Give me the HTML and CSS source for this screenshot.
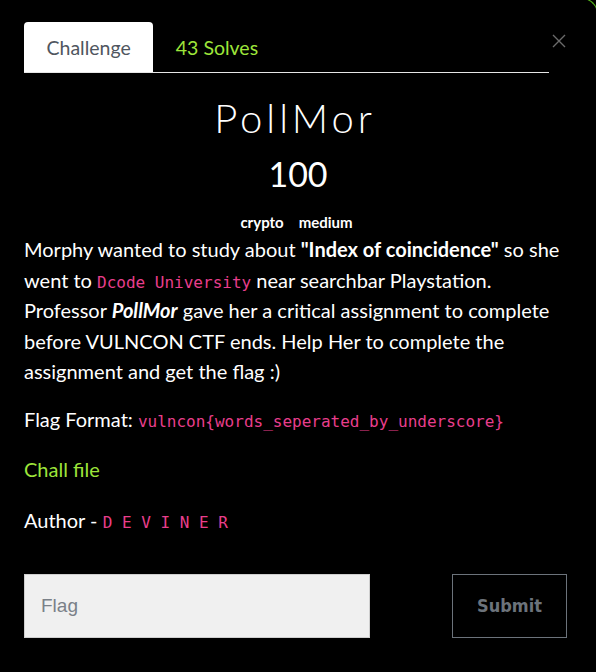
FILE: index.html
```html
<!DOCTYPE html>
<html>
<head>
<meta charset="utf-8">
<link rel="stylesheet" href="styles.css">
</head>
<body>
<div class="frame"></div>
<div class="modal">
  <div class="header">
    <nav class="tabs">
      <a class="tab active">Challenge</a>
      <a class="tab solves">43 Solves</a>
    </nav>
    <button class="close" aria-label="Close">
      <svg width="14" height="14" viewBox="0 0 14 14"><path d="M1 1L13 13M13 1L1 13" stroke="#6b6b6b" stroke-width="1.4" fill="none"/></svg>
    </button>
  </div>
  <h2 class="title">PollMor</h2>
  <h3 class="points">100</h3>
  <div class="tags"><span>crypto</span><span>medium</span></div>
  <p class="desc">Morphy wanted to study about <strong>"Index of coincidence"</strong> so she went to <code>Dcode University</code> near searchbar Playstation. Professor <strong><em>PollMor</em></strong> gave her a critical assignment to complete before VULNCON CTF ends. Help Her to complete the assignment and get the flag :)</p>
  <p class="line format">Flag Format: <code>vulncon{words_seperated_by_underscore}</code></p>
  <p class="line"><a class="file">Chall file</a></p>
  <p class="line author-line">Author - <code>D E V I N E R</code></p>
  <form class="submit-row">
    <input class="flag" type="text" placeholder="Flag">
    <button class="submit" type="button">Submit</button>
  </form>
</div>
</body>
</html>
```

FILE: styles.css
```css
html, body {
  margin: 0;
  padding: 0;
  background: #000;
}
body {
  width: 596px;
  height: 672px;
  overflow: hidden;
  position: relative;
  font-family: Lato, "Open Sans", sans-serif;
  color: #fff;
}
.frame {
  position: absolute;
  box-sizing: border-box;
  left: -20px;
  top: -2px;
  width: 618px;
  height: 674px;
  border: 1.5px solid #56b81c;
  border-bottom: none;
  border-radius: 16px 16px 0 0;
  pointer-events: none;
}
.modal {
  padding: 22px 24px 0 24px;
}
.header {
  display: flex;
  align-items: flex-start;
}
.tabs {
  display: flex;
  width: 525px;
  border-bottom: 1px solid #e6e6e6;
}
.tab {
  display: block;
  height: 50px;
  line-height: 52px;
  padding: 0 22.5px;
  font-size: 19.5px;
  text-decoration: none;
  border-radius: 4px 4px 0 0;
}
.tab.active {
  background: #fff;
  color: #4f5660;
}
.solves {
  color: #9de53a;
}
.close {
  background: none;
  border: 0;
  padding: 0;
  margin: 12px 0 0 3px;
  width: 14px;
  height: 14px;
  display: flex;
}
.title {
  margin: 21px 0 0 0;
  padding-right: 6px;
  text-align: center;
  font-weight: 300;
  font-size: 40px;
  letter-spacing: 4px;
  line-height: 48px;
}
.points {
  margin: 11px 0 0 0;
  text-align: center;
  font-weight: 400;
  font-size: 34px;
  line-height: 42px;
}
.tags {
  display: flex;
  justify-content: center;
  gap: 15px;
  margin-top: 19px;
  padding-right: 3px;
  font-size: 15px;
  font-weight: 700;
  line-height: 16px;
}
.desc {
  margin: 4px 0 0 0;
  font-size: 20px;
  line-height: 30.5px;
}
code {
  font-family: "DejaVu Sans Mono", monospace;
  font-size: 16px;
  line-height: 1;
  color: #e83e8c;
}
.line {
  margin: 20px 0 0 0;
  font-size: 20px;
  line-height: 30px;
}
.line.format {
  margin-top: 17px;
}
.line.author-line {
  margin-top: 21px;
}
.file {
  color: #9de53a;
}
.submit-row {
  display: flex;
  gap: 82px;
  margin-top: 39px;
}
.flag {
  box-sizing: border-box;
  width: 346px;
  height: 64px;
  background: #f0f0f0;
  border: 1px solid #cfcfcf;
  padding: 0 16px;
  font-family: "Liberation Sans", Arial, sans-serif;
  font-size: 19px;
  color: #333;
  outline: none;
}
.flag::placeholder {
  color: #7a8088;
}
.submit {
  box-sizing: border-box;
  width: 115px;
  height: 64px;
  background: #000;
  border: 1px solid #6c737b;
  color: #6c737b;
  font-family: "DejaVu Sans Condensed", "DejaVu Sans", sans-serif;
  font-weight: 700;
  font-size: 18px;
}
```
